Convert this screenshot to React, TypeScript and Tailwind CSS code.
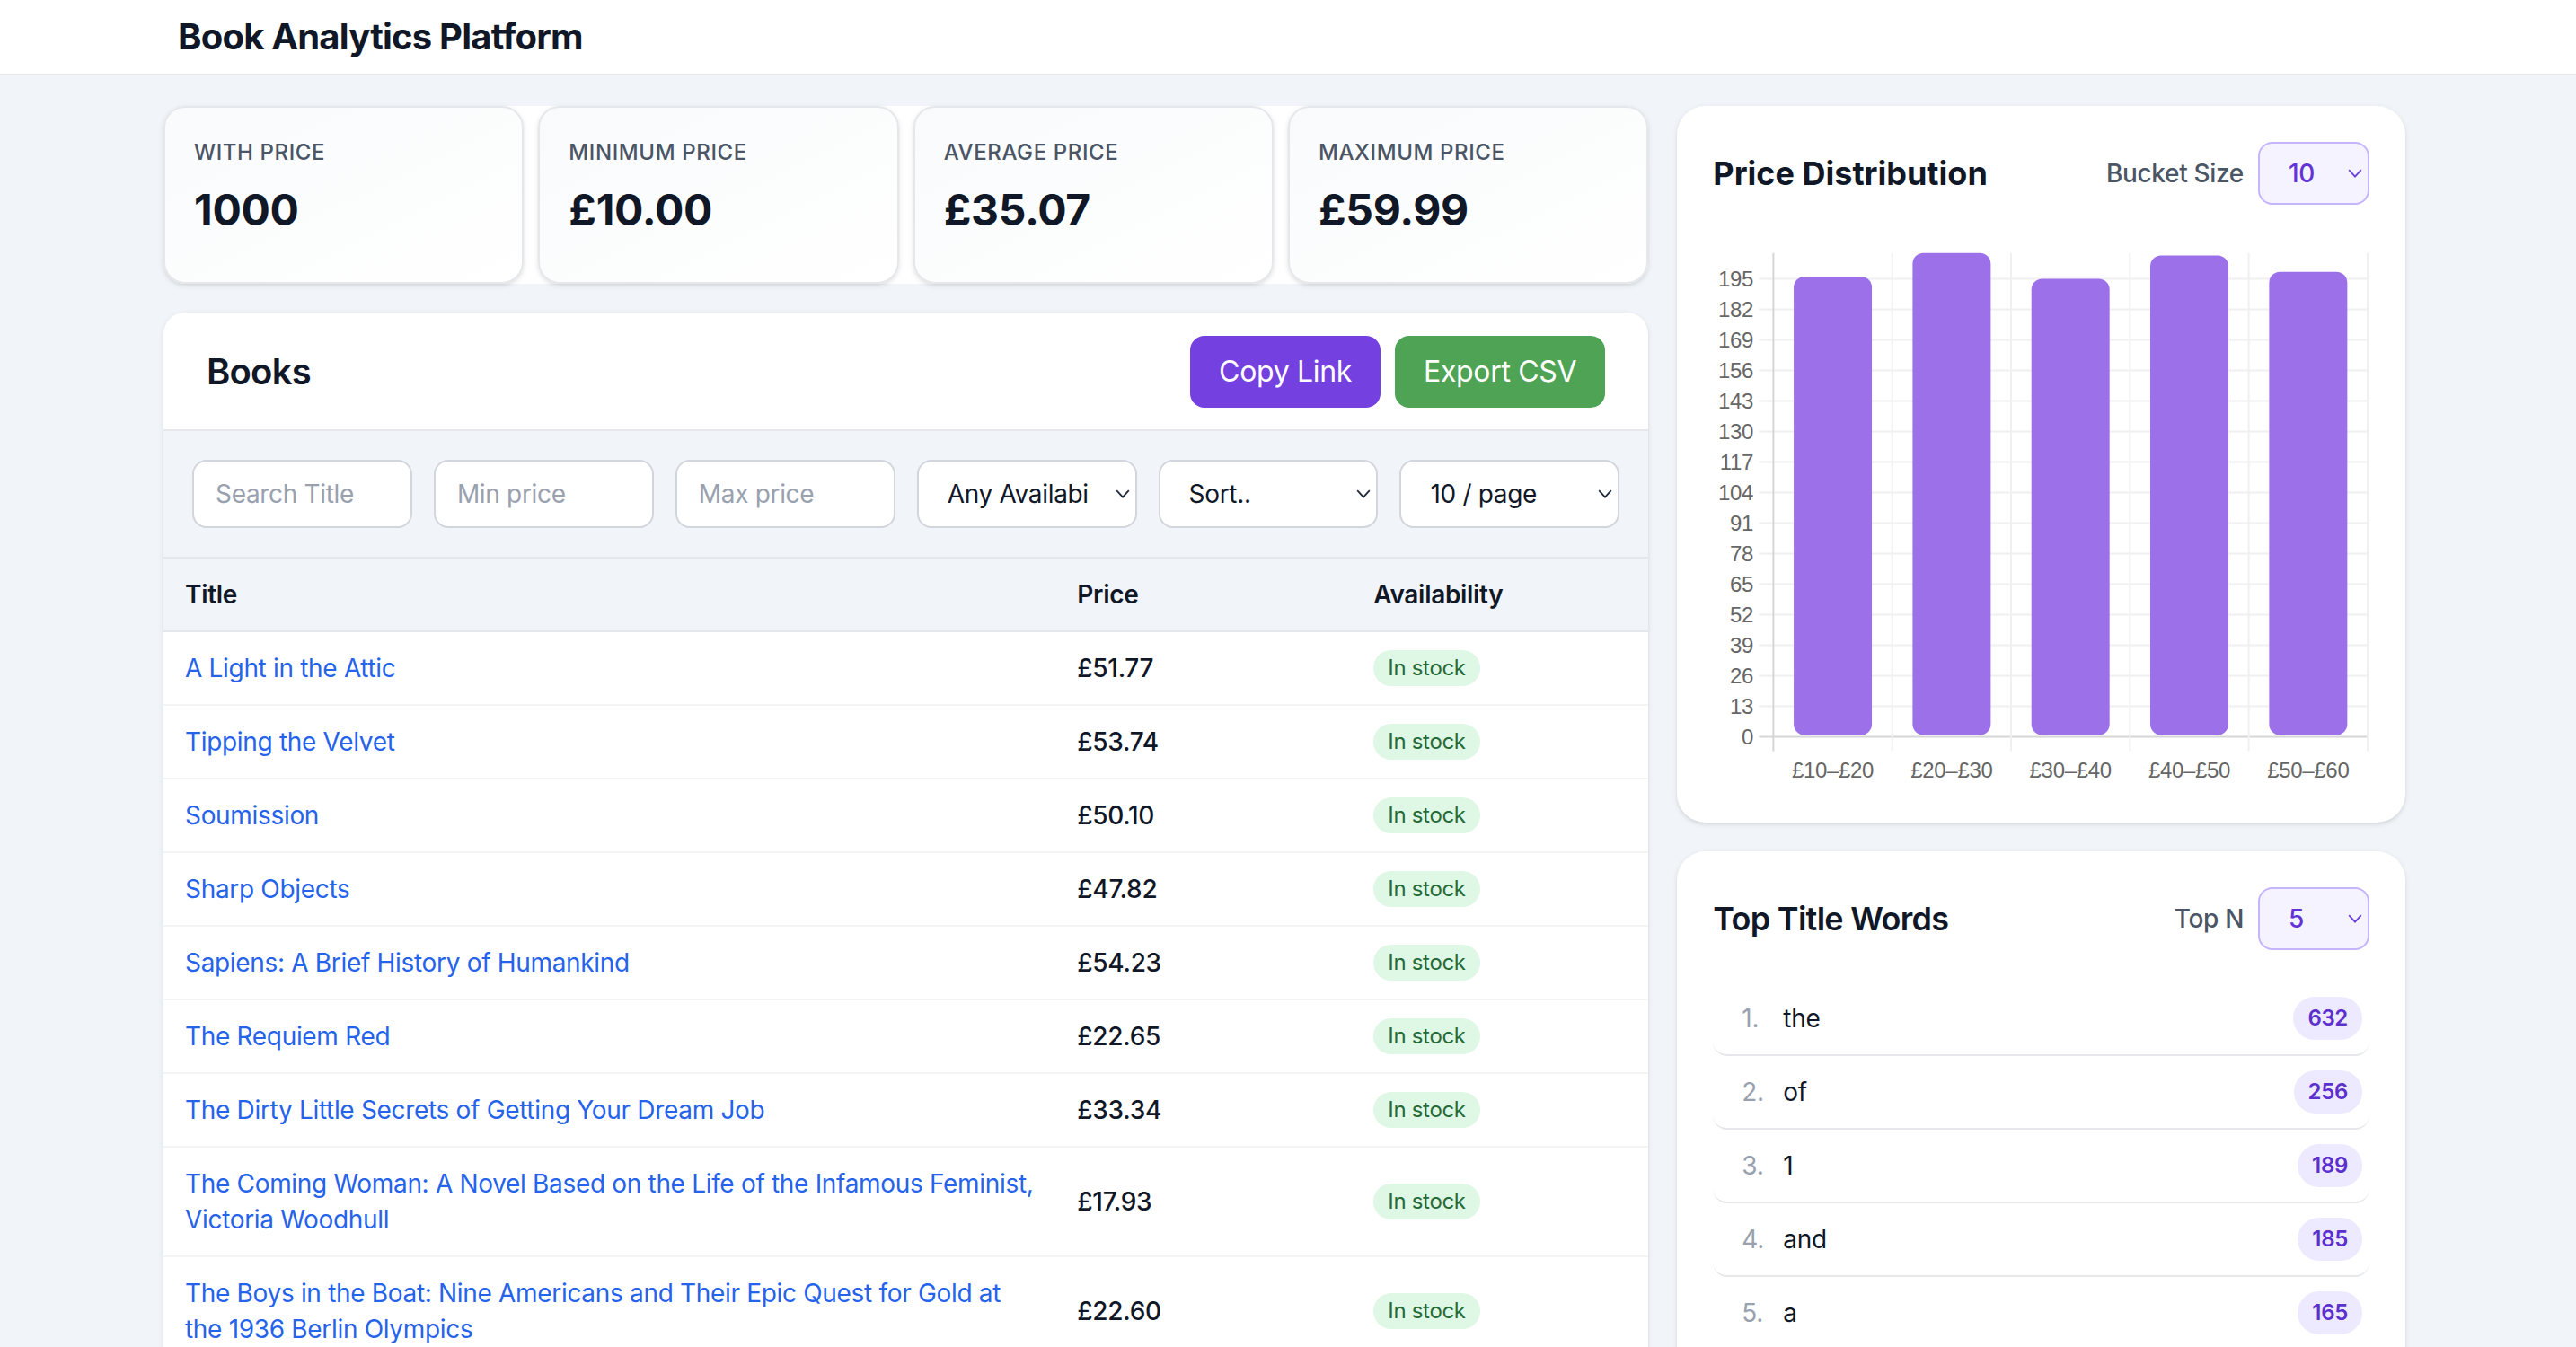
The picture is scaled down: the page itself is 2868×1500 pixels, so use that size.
import { useState } from "react";

const stats = [
  { label: "With price", value: "1000" },
  { label: "Minimum price", value: "£10.00" },
  { label: "Average price", value: "£35.07" },
  { label: "Maximum price", value: "£59.99" },
];

const books = [
  { title: "A Light in the Attic", price: "£51.77" },
  { title: "Tipping the Velvet", price: "£53.74" },
  { title: "Soumission", price: "£50.10" },
  { title: "Sharp Objects", price: "£47.82" },
  { title: "Sapiens: A Brief History of Humankind", price: "£54.23" },
  { title: "The Requiem Red", price: "£22.65" },
  { title: "The Dirty Little Secrets of Getting Your Dream Job", price: "£33.34" },
  {
    title: "The Coming Woman: A Novel Based on the Life of the Infamous Feminist, Victoria Woodhull",
    price: "£17.93",
  },
  {
    title: "The Boys in the Boat: Nine Americans and Their Epic Quest for Gold at the 1936 Berlin Olympics",
    price: "£22.60",
  },
  { title: "The Black Maria", price: "£52.15" },
];

const buckets = [
  { label: "£10–£20", count: 196 },
  { label: "£20–£30", count: 206 },
  { label: "£30–£40", count: 195 },
  { label: "£40–£50", count: 205 },
  { label: "£50–£60", count: 198 },
];

const words = [
  { word: "the", count: 632 },
  { word: "of", count: 256 },
  { word: "1", count: 189 },
  { word: "and", count: 185 },
  { word: "a", count: 165 },
];

function Chevron({ className }: { className: string }) {
  return (
    <svg
      viewBox="0 0 8 5"
      className={`pointer-events-none absolute top-1/2 -translate-y-1/2 ${className}`}
    >
      <path d="M0.6 0.6 L4 4.3 L7.4 0.6" fill="none" stroke="currentColor" strokeWidth="0.9" />
    </svg>
  );
}

function FilterSelect({ options }: { options: string[] }) {
  return (
    <div className="relative text-gray-800">
      <select className="h-[38px] w-full appearance-none rounded-lg border border-gray-300 bg-white pl-4 pr-[25px] text-sm text-gray-900 outline-none">
        {options.map((o) => (
          <option key={o}>{o}</option>
        ))}
      </select>
      <Chevron className="right-1 h-[5px] w-2" />
    </div>
  );
}

function VioletSelect({ value, options, onChange }: { value: string; options: string[]; onChange: (v: string) => void }) {
  return (
    <div className="relative text-[#6a3fdc]">
      <select
        value={value}
        onChange={(e) => onChange(e.target.value)}
        className="h-[35px] w-[62px] appearance-none rounded-lg border border-[#c4b5fd] bg-[#f5f3ff] pl-4 text-sm text-[#6233d6] outline-none"
      >
        {options.map((o) => (
          <option key={o}>{o}</option>
        ))}
      </select>
      <Chevron className="right-1 h-[5px] w-2" />
    </div>
  );
}

// chart geometry, in px inside the svg
const CW = 365;
const CH = 308;
const LEFT = 33.7;
const RIGHT = 364.5;
const ZERO = 280.3;
const UNIT = 1.3077;
const TOP = ZERO - 206 * UNIT;
const CAT = (RIGHT - LEFT) / buckets.length;
const BAR = 43.5;
const ticks = Array.from({ length: 16 }, (_, i) => i * 13);

function PriceChart() {
  return (
    <svg width={CW} height={CH} className="mt-4 block">
      {ticks.map((t) => (
        <line
          key={t}
          x1={LEFT - 8}
          x2={RIGHT}
          y1={ZERO - t * UNIT}
          y2={ZERO - t * UNIT}
          stroke={t === 0 ? "#d6d6d6" : "#f0f0f0"}
          strokeWidth="1"
        />
      ))}
      {buckets.map((_, i) => (
        <line
          key={i}
          x1={LEFT + (i + 1) * CAT}
          x2={LEFT + (i + 1) * CAT}
          y1={TOP}
          y2={ZERO + 8}
          stroke="#f0f0f0"
          strokeWidth="1"
        />
      ))}
      <line x1={LEFT} x2={LEFT} y1={TOP} y2={ZERO + 8} stroke="#d6d6d6" strokeWidth="1" />
      {buckets.map((b, i) => (
        <rect
          key={b.label}
          x={LEFT + i * CAT + (CAT - BAR) / 2}
          y={ZERO - b.count * UNIT}
          width={BAR}
          height={b.count * UNIT - 1}
          rx="6"
          fill="#9b70e9"
        />
      ))}
      {ticks.map((t) => (
        <text
          key={t}
          x={22.5}
          y={ZERO - t * UNIT}
          textAnchor="end"
          dominantBaseline="central"
          fontSize="12"
          fill="#666"
          fontFamily="'Liberation Sans', Arial, sans-serif"
        >
          {t}
        </text>
      ))}
      {buckets.map((b, i) => (
        <text
          key={b.label}
          x={LEFT + i * CAT + CAT / 2}
          y={298.5}
          textAnchor="middle"
          dominantBaseline="central"
          fontSize="12"
          fill="#666"
          fontFamily="'Liberation Sans', Arial, sans-serif"
        >
          {b.label}
        </text>
      ))}
    </svg>
  );
}

export default function App() {
  const [bucket, setBucket] = useState("10");
  const [topN, setTopN] = useState("5");

  return (
    <div className="min-h-screen bg-slate-100 font-['Inter',sans-serif] tracking-[-0.01em]">
      <div className="[zoom:2]">
        {/* Top bar */}
        <header className="flex h-[42px] items-center border-b border-gray-200 bg-white">
          <div className="mx-auto w-full max-w-7xl px-[22px]">
            <h1 className="text-xl font-bold tracking-[-0.02em] text-gray-900">Book Analytics Platform</h1>
          </div>
        </header>

        <main className="mx-auto max-w-7xl pl-3.5 pr-[18px] pt-[17px] pb-8">
          <div className="grid grid-cols-3 items-start gap-4">
            {/* Left column */}
            <div className="col-span-2 flex flex-col gap-4">
              <div className="grid grid-cols-4 gap-2 rounded-xl bg-white">
                {stats.map((s) => (
                  <div
                    key={s.label}
                    className="h-[99px] rounded-xl border border-gray-200 bg-linear-to-br from-gray-50 to-white px-4 pt-[17px] shadow-sm"
                  >
                    <div className="text-xs font-medium uppercase tracking-wide text-gray-600">{s.label}</div>
                    <div className="mt-2 text-2xl font-bold text-gray-900">{s.value}</div>
                  </div>
                ))}
              </div>

              <section className="overflow-hidden rounded-xl bg-white shadow-sm">
                <div className="flex items-center justify-between border-b border-gray-200 px-6 pt-[13px] pb-3">
                  <h2 className="text-xl font-semibold tracking-[-0.02em] text-gray-900">Books</h2>
                  <div className="flex gap-2">
                    <button className="rounded-lg bg-[#7540e0] px-4 py-2 text-base text-white">Copy Link</button>
                    <button className="rounded-lg bg-[#4ea354] px-4 py-2 text-base text-white">Export CSV</button>
                  </div>
                </div>

                <div className="grid grid-cols-6 gap-3 border-b border-gray-200 bg-slate-100 p-4">
                  <input
                    placeholder="Search Title"
                    className="h-[38px] rounded-lg border border-gray-300 bg-white px-3 text-sm outline-none placeholder:text-gray-400"
                  />
                  <input
                    placeholder="Min price"
                    className="h-[38px] rounded-lg border border-gray-300 bg-white px-3 text-sm outline-none placeholder:text-gray-400"
                  />
                  <input
                    placeholder="Max price"
                    className="h-[38px] rounded-lg border border-gray-300 bg-white px-3 text-sm outline-none placeholder:text-gray-400"
                  />
                  <FilterSelect options={["Any Availability", "In stock", "Out of stock"]} />
                  <FilterSelect options={["Sort..", "Price ↑", "Price ↓", "Title A–Z"]} />
                  <FilterSelect options={["10 / page", "25 / page", "50 / page"]} />
                </div>

                <table className="w-full table-fixed text-sm">
                  <colgroup>
                    <col />
                    <col className="w-[165px]" />
                    <col className="w-[165px]" />
                  </colgroup>
                  <thead className="bg-slate-100">
                    <tr className="border-b border-gray-200">
                      <th className="px-3 py-2.5 text-left font-semibold text-gray-900">Title</th>
                      <th className="px-3 py-2.5 text-left font-semibold text-gray-900">Price</th>
                      <th className="px-3 py-2.5 text-left font-semibold text-gray-900">Availability</th>
                    </tr>
                  </thead>
                  <tbody>
                    {books.map((b) => (
                      <tr key={b.title} className="border-b border-gray-100">
                        <td className="py-2.5 pl-3 pr-2 align-middle">
                          <a href="#" className="text-[#2563eb] hover:underline">
                            {b.title}
                          </a>
                        </td>
                        <td className="px-3 py-2.5 align-middle font-medium text-gray-900">{b.price}</td>
                        <td className="px-3 py-2.5 align-middle">
                          <div className="flex">
                            <span className="rounded-full bg-[#dff7e5] px-2 py-0.5 text-xs leading-4 text-[#256b38]">
                              In stock
                            </span>
                          </div>
                        </td>
                      </tr>
                    ))}
                  </tbody>
                </table>
              </section>
            </div>

            {/* Right column */}
            <div className="flex flex-col gap-4">
              <section className="rounded-2xl bg-white p-5 shadow-sm">
                <div className="flex items-center justify-between">
                  <h2 className="text-lg font-bold tracking-normal text-gray-900">Price Distribution</h2>
                  <label className="flex items-center gap-2 text-sm font-medium text-gray-600">
                    Bucket Size
                    <VioletSelect value={bucket} options={["5", "10", "20"]} onChange={setBucket} />
                  </label>
                </div>
                <PriceChart />
              </section>

              <section className="rounded-2xl bg-white p-5 shadow-sm">
                <div className="mb-[18px] flex items-center justify-between">
                  <h2 className="text-lg font-semibold tracking-[-0.02em] text-gray-900">Top Title Words</h2>
                  <label className="flex items-center gap-2 text-sm font-medium text-gray-600">
                    Top N
                    <VioletSelect value={topN} options={["5", "10", "20"]} onChange={setTopN} />
                  </label>
                </div>
                <ol className="divide-y divide-gray-200">
                  {words.map((w, i) => (
                    <li key={w.word} className="flex items-center justify-between rounded-lg py-2 pl-4 pr-1 text-sm">
                      <span className="flex items-center">
                        <span className="w-[23px] text-gray-400">{i + 1}.</span>
                        <span className="text-gray-900">{w.word}</span>
                      </span>
                      <span className="rounded-full bg-[#ede9fe] px-2 py-1 text-xs font-semibold text-[#5b30cc]">
                        {w.count}
                      </span>
                    </li>
                  ))}
                </ol>
              </section>
            </div>
          </div>
        </main>
      </div>
    </div>
  );
}
